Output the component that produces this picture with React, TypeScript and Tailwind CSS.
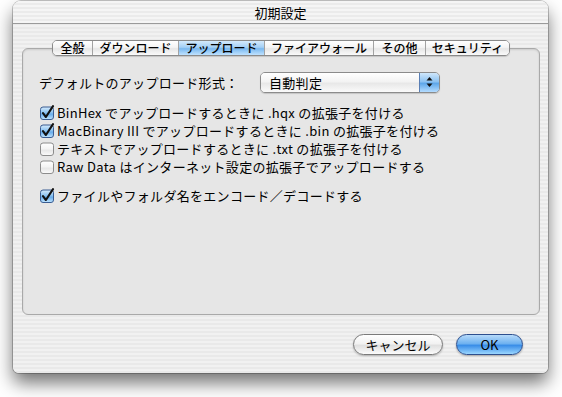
import React from "react";

const tabs = [
  { label: "全般", w: "w-[39px]" },
  { label: "ダウンロード", w: "w-[86px]" },
  { label: "アップロード", w: "w-[86px]" },
  { label: "ファイアウォール", w: "w-[109px]" },
  { label: "その他", w: "w-[52px]" },
  { label: "セキュリティ", w: "w-[84px]" },
];

const options = [
  { text: "BinHex でアップロードするときに .hqx の拡張子を付ける", checked: true },
  { text: "MacBinary III でアップロードするときに .bin の拡張子を付ける", checked: true },
  { text: "テキストでアップロードするときに .txt の拡張子を付ける", checked: false },
  { text: "Raw Data はインターネット設定の拡張子でアップロードする", checked: false },
];

const CheckBox: React.FC<{ checked: boolean; id: string }> = ({ checked, id }) => (
  <svg width="15" height="15" viewBox="0 0 15 15" className="shrink-0">
    <defs>
      <linearGradient id={id} x1="0" y1="0" x2="0" y2="1">
        {checked ? (
          <>
            <stop offset="0" stopColor="#d6ebfc" />
            <stop offset="0.5" stopColor="#82bdef" />
            <stop offset="0.55" stopColor="#64a9ea" />
            <stop offset="1" stopColor="#c2e6ff" />
          </>
        ) : (
          <>
            <stop offset="0" stopColor="#ffffff" />
            <stop offset="0.5" stopColor="#f3f3f3" />
            <stop offset="0.55" stopColor="#e6e6e6" />
            <stop offset="1" stopColor="#fbfbfb" />
          </>
        )}
      </linearGradient>
    </defs>
    <rect x="0.5" y="2" width="13" height="12.5" rx="2.5" fill={`url(#${id})`} stroke={checked ? "#3a5d92" : "#8c8c8c"} />
    {checked && (
      <path d="M3 8.2 L5.9 12 L13 1.2" stroke="#111" strokeWidth="2.1" fill="none" strokeLinecap="round" strokeLinejoin="round" />
    )}
  </svg>
);

const App: React.FC = () => {
  return (
    <div className="w-[562px] h-[397px] bg-white pl-[13px] pt-px overflow-hidden [font-family:'Noto_Sans_CJK_JP',sans-serif] text-black">
      <div className="w-[535px] h-[372px] rounded-t-[8px] rounded-b-[6px] flex flex-col overflow-hidden shadow-[0_0_0_1px_rgba(0,0,0,0.22),0_10px_18px_rgba(0,0,0,0.55)] bg-[repeating-linear-gradient(180deg,#f1f1f1_0px,#f1f1f1_2px,#e9e9e9_2px,#e9e9e9_4px)]">
        {/* title bar */}
        <div className="h-[23px] shrink-0 flex items-center justify-center border-b border-[#9a9a9a] bg-[repeating-linear-gradient(180deg,#f5f5f5_0px,#f5f5f5_2px,#ebebeb_2px,#ebebeb_4px)] text-[13px] leading-none">
          初期設定
        </div>

        <div className="flex flex-col pt-[16px] pl-[9px] pr-[8px]">
          {/* tabs */}
          <div className="relative z-10 flex justify-center h-[16px]">
            <div className="flex h-[16px] rounded-[5px] border border-[#8a8a8a] overflow-hidden shadow-[0_1px_1px_rgba(0,0,0,0.15)]">
              {tabs.map((t, i) => (
                <div
                  key={t.label}
                  className={`${t.w} h-full flex items-center justify-center text-[12px] font-medium leading-none ${i > 0 ? "border-l border-[#a2a2a2]" : ""} ${
                    i === 2
                      ? "bg-[linear-gradient(180deg,#d4eafc,#a3cff5_45%,#7ab8ef_55%,#bfe2ff)]"
                      : "bg-[linear-gradient(180deg,#ffffff,#f4f4f4_45%,#e6e6e6_55%,#fafafa)]"
                  }`}
                >
                  {t.label}
                </div>
              ))}
            </div>
          </div>

          {/* tab box */}
          <div className="-mt-[8px] h-[267px] rounded-[6px] border border-[#a9a9a9] bg-[#e6e6e6] shadow-[inset_0_1px_2px_rgba(0,0,0,0.12)] pl-[16px] pt-[23px]">
            <div className="flex items-center h-[20px]">
              <div className="w-[221px] text-[13px] leading-none tracking-[0.3px]">デフォルトのアップロード形式：</div>
              <div className="w-[180px] h-[21px] flex rounded-[5px] border border-[#8b8b8b] overflow-hidden shadow-[0_1px_1px_rgba(0,0,0,0.15)]">
                <div className="flex-1 flex items-center pl-[8px] text-[13px] leading-none tracking-[0.3px] bg-[linear-gradient(180deg,#ffffff,#f3f3f3_45%,#e8e8e8_55%,#fafafa)]">
                  自動判定
                </div>
                <div className="w-[20px] flex items-center justify-center border-l border-[#5a7fb5] bg-[linear-gradient(180deg,#cfe7fb,#8dc2f1_45%,#5ea7ea_55%,#b4dcff)]">
                  <svg width="7" height="12" viewBox="0 0 7 12">
                    <path d="M3.5 1 L6.5 4.5 L0.5 4.5 Z" fill="#111" />
                    <path d="M3.5 11 L6.5 7.5 L0.5 7.5 Z" fill="#111" />
                  </svg>
                </div>
              </div>
            </div>

            <div className="flex flex-col mt-[11px] pl-px">
              {options.map((o, i) => (
                <div key={i} className="h-[18px] flex items-center gap-[2px]">
                  <CheckBox checked={o.checked} id={`cb${i}`} />
                  <span className="text-[13px] leading-none whitespace-nowrap tracking-[0.3px]">{o.text}</span>
                </div>
              ))}
              <div className="h-[18px] mt-[11px] flex items-center gap-[2px]">
                <CheckBox checked id="cb9" />
                <span className="text-[13px] leading-none whitespace-nowrap tracking-[0.3px]">ファイルやフォルダ名をエンコード／デコードする</span>
              </div>
            </div>
          </div>

          {/* buttons */}
          <div className="flex justify-end gap-[13px] mt-[19px] pr-[17px]">
            <button className="w-[90px] h-[21px] rounded-full border border-[#7a7a7a] text-[13px] leading-none flex items-center justify-center bg-[linear-gradient(180deg,#ffffff,#f2f2f2_45%,#e0e0e0_55%,#fbfbfb)] shadow-[0_1px_2px_rgba(0,0,0,0.25)]">
              キャンセル
            </button>
            <button className="w-[67px] h-[21px] rounded-full border border-[#2d4f8e] text-[13px] leading-none flex items-center justify-center bg-[linear-gradient(180deg,#b6dafa,#6fb2f0_45%,#3a8ee8_55%,#9ad6ff)] shadow-[0_1px_2px_rgba(0,0,0,0.3)]">
              OK
            </button>
          </div>
        </div>
      </div>
    </div>
  );
};

export default App;
